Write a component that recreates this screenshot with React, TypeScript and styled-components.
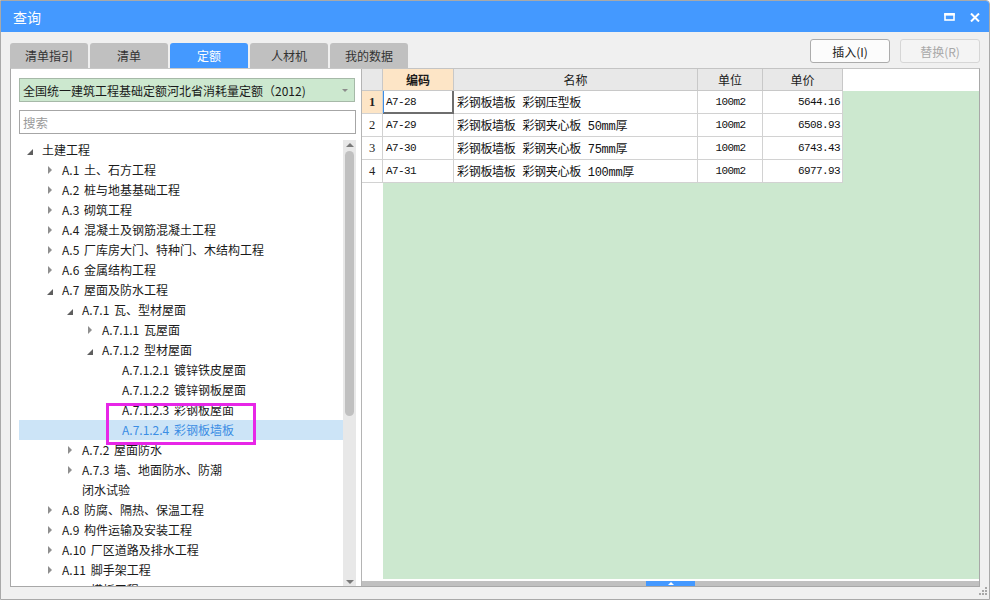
import React from 'react';
import styled, { createGlobalStyle } from 'styled-components';

const BLUE = '#4499ff';
const GREEN = '#cce8cf';
const GRID = '#d2d2d2';

const GlobalStyle = createGlobalStyle`
  html, body { margin: 0; padding: 0; }
  body {
    width: 990px;
    height: 600px;
    overflow: hidden;
    font-family: "Noto Sans CJK SC", "Noto Sans", sans-serif;
  }
  * { box-sizing: border-box; }
`;

type TreeNode = {
  label: string;
  level: number;
  state: 'open' | 'closed' | 'leaf';
  selected?: boolean;
};

const treeData: TreeNode[] = [
  { label: '土建工程', level: 0, state: 'open' },
  { label: 'A.1 土、石方工程', level: 1, state: 'closed' },
  { label: 'A.2 桩与地基基础工程', level: 1, state: 'closed' },
  { label: 'A.3 砌筑工程', level: 1, state: 'closed' },
  { label: 'A.4 混凝土及钢筋混凝土工程', level: 1, state: 'closed' },
  { label: 'A.5 厂库房大门、特种门、木结构工程', level: 1, state: 'closed' },
  { label: 'A.6 金属结构工程', level: 1, state: 'closed' },
  { label: 'A.7 屋面及防水工程', level: 1, state: 'open' },
  { label: 'A.7.1 瓦、型材屋面', level: 2, state: 'open' },
  { label: 'A.7.1.1 瓦屋面', level: 3, state: 'closed' },
  { label: 'A.7.1.2 型材屋面', level: 3, state: 'open' },
  { label: 'A.7.1.2.1 镀锌铁皮屋面', level: 4, state: 'leaf' },
  { label: 'A.7.1.2.2 镀锌钢板屋面', level: 4, state: 'leaf' },
  { label: 'A.7.1.2.3 彩钢板屋面', level: 4, state: 'leaf' },
  { label: 'A.7.1.2.4 彩钢板墙板', level: 4, state: 'leaf', selected: true },
  { label: 'A.7.2 屋面防水', level: 2, state: 'closed' },
  { label: 'A.7.3 墙、地面防水、防潮\n闭水试验', level: 2, state: 'closed' },
  { label: 'A.8 防腐、隔热、保温工程', level: 1, state: 'closed' },
  { label: 'A.9 构件运输及安装工程', level: 1, state: 'closed' },
  { label: 'A.10 厂区道路及排水工程', level: 1, state: 'closed' },
  { label: 'A.11 脚手架工程', level: 1, state: 'closed' },
  { label: 'A.12 模板工程', level: 1, state: 'closed' },
];

const tabs = ['清单指引', '清单', '定额', '人材机', '我的数据'];

const columns = [
  { key: 'code', title: '编码', w: 71, align: 'left' },
  { key: 'name', title: '名称', w: 244, align: 'left' },
  { key: 'unit', title: '单位', w: 65, align: 'center' },
  { key: 'price', title: '单价', w: 80, align: 'right' },
] as const;

const rows = [
  { code: 'A7-28', name: '彩钢板墙板 彩钢压型板', unit: '100m2', price: '5644.16' },
  { code: 'A7-29', name: '彩钢板墙板 彩钢夹心板 50mm厚', unit: '100m2', price: '6508.93' },
  { code: 'A7-30', name: '彩钢板墙板 彩钢夹心板 75mm厚', unit: '100m2', price: '6743.43' },
  { code: 'A7-31', name: '彩钢板墙板 彩钢夹心板 100mm厚', unit: '100m2', price: '6977.93' },
];

export default function App() {
  return (
    <>
      <GlobalStyle />
      <Window>
        <TitleBar>
          <Title>查询</Title>
          <TitleIcons>
            <svg width="11" height="8" viewBox="0 0 11 8">
              <rect x="1" y="1.25" width="9" height="5.75" fill="none" stroke="#fff" strokeWidth="1.6" />
              <rect x="0.2" y="0" width="10.6" height="2.6" fill="#fff" />
            </svg>
            <svg width="10" height="9" viewBox="0 0 10 9">
              <path d="M1 0.5 L9 8.5 M9 0.5 L1 8.5" stroke="#fff" strokeWidth="2" />
            </svg>
          </TitleIcons>
        </TitleBar>

        <Body>
          <Toolbar>
            <Tabs>
              {tabs.map((t) => (
                <Tab key={t} $active={t === '定额'}>{t}</Tab>
              ))}
            </Tabs>
            <Buttons>
              <Button>插入(I)</Button>
              <Button $disabled>替换(R)</Button>
            </Buttons>
          </Toolbar>

          <Content>
            <LeftPane>
              <Select>
                <span>全国统一建筑工程基础定额河北省消耗量定额（2012)</span>
                <SelectArrow />
              </Select>
              <Search>搜索</Search>
              <Tree>
                <TreeList>
                  {treeData.map((n) => (
                    <TreeRow key={n.label} $level={n.level} $selected={n.selected}>
                      <Toggle>
                        {n.state === 'open' && <OpenArrow />}
                        {n.state === 'closed' && <ClosedArrow />}
                      </Toggle>
                      <TreeLabel>{n.label}</TreeLabel>
                    </TreeRow>
                  ))}
                  <Marker />
                </TreeList>
                <VScroll>
                  <ArrowUp />
                  <VThumb />
                  <Spacer />
                  <ArrowDown />
                </VScroll>
              </Tree>
            </LeftPane>

            <RightPane>
              <HeaderRow>
                <HeadNum />
                {columns.map((c) => (
                  <HeadCell key={c.key} $w={c.w} $active={c.key === 'code'}>
                    {c.title}
                  </HeadCell>
                ))}
              </HeaderRow>
              <TableBody>
                <NumColumn>
                  {rows.map((r, i) => (
                    <NumCell key={r.code} $active={i === 0}>{i + 1}</NumCell>
                  ))}
                </NumColumn>
                <DataArea>
                  {rows.map((r, i) => (
                    <DataRow key={r.code}>
                      {columns.map((c) => (
                        <Cell
                          key={c.key}
                          $w={c.w}
                          $align={c.align}
                          $mono={c.key !== 'name'}
                          $focus={i === 0 && c.key === 'code'}
                        >
                          {r[c.key]}
                        </Cell>
                      ))}
                    </DataRow>
                  ))}
                </DataArea>
              </TableBody>
              <HScroll>
                <HThumb>
                  <HThumbArrow />
                </HThumb>
              </HScroll>
            </RightPane>
          </Content>

          <Footer>
            <svg width="10" height="10" viewBox="0 0 10 10">
              {[
                [7, 0],
                [4, 3], [7, 3],
                [1, 6], [4, 6], [7, 6],
              ].map(([x, y]) => (
                <rect key={`${x}-${y}`} x={x} y={y} width="2" height="2" fill="#a8a8a8" />
              ))}
            </svg>
          </Footer>
        </Body>
      </Window>
    </>
  );
}

const Window = styled.div`
  width: 990px;
  height: 600px;
  display: flex;
  flex-direction: column;
  border: 1px solid #a9a9a9;
  border-top-right-radius: 4px;
  background: #f0f0f0;
  overflow: hidden;
`;

const TitleBar = styled.div`
  height: 31px;
  flex: none;
  display: flex;
  align-items: center;
  justify-content: space-between;
  padding: 0 9px 0 12px;
  background: ${BLUE};
`;

const Title = styled.div`
  color: #fff;
  font-size: 14px;
`;

const TitleIcons = styled.div`
  display: flex;
  align-items: center;
  gap: 15px;
  padding-top: 1px;
`;

const Body = styled.div`
  flex: 1;
  display: flex;
  flex-direction: column;
  padding: 7px 9px 0 9px;
`;

const Toolbar = styled.div`
  height: 29px;
  flex: none;
  display: flex;
  justify-content: space-between;
`;

const Tabs = styled.div`
  display: flex;
  align-items: flex-end;
  gap: 2px;
`;

const Tab = styled.div<{ $active?: boolean }>`
  width: 78px;
  height: 25px;
  display: flex;
  align-items: center;
  justify-content: center;
  border-radius: 3px 3px 0 0;
  font-size: 12px;
  background: ${(p) => (p.$active ? BLUE : '#c0c0c0')};
  color: ${(p) => (p.$active ? '#fff' : '#333')};
`;

const Buttons = styled.div`
  display: flex;
  align-items: flex-start;
  gap: 10px;
`;

const Button = styled.div<{ $disabled?: boolean }>`
  width: 80px;
  height: 24px;
  display: flex;
  align-items: center;
  justify-content: center;
  border-radius: 3px;
  font-size: 12px;
  border: 1px solid ${(p) => (p.$disabled ? '#d6d6d6' : '#acacac')};
  background: ${(p) => (p.$disabled ? '#f4f4f4' : '#fcfcfc')};
  color: ${(p) => (p.$disabled ? '#a8a8a8' : '#222')};
`;

const Content = styled.div`
  height: 519px;
  flex: none;
  display: flex;
  border: 1px solid #a8a8a8;
  border-top-color: #c8c8c8;
  background: #fff;
`;

const LeftPane = styled.div`
  width: 351px;
  flex: none;
  display: flex;
  flex-direction: column;
  padding: 9px 5px 0 8px;
  border-right: 1px solid #b4b4b4;
  background: #fff;
`;

const Select = styled.div`
  height: 24px;
  flex: none;
  display: flex;
  align-items: center;
  justify-content: space-between;
  padding: 0 6px 0 3px;
  margin-right: 1px;
  border: 1px solid #a6b9a8;
  background: ${GREEN};
  font-size: 12px;
  color: #1a1a1a;
`;

const SelectArrow = styled.span`
  width: 0;
  height: 0;
  border-left: 3px solid transparent;
  border-right: 3px solid transparent;
  border-top: 3px solid #8c8c8c;
`;

const Search = styled.div`
  height: 24px;
  flex: none;
  margin-top: 8px;
  display: flex;
  align-items: center;
  padding-left: 3px;
  border: 1px solid #a6a6a6;
  font-size: 12.5px;
  color: #9a9a9a;
`;

const Tree = styled.div`
  flex: 1;
  min-height: 0;
  margin-top: 6px;
  display: flex;
`;

const TreeList = styled.div`
  flex: 1;
  position: relative;
  overflow: hidden;
`;

const TreeRow = styled.div<{ $level: number; $selected?: boolean }>`
  display: flex;
  align-items: flex-start;
  min-height: 20px;
  line-height: 20px;
  padding-left: ${(p) => p.$level * 20 + 5}px;
  font-size: 12px;
  word-spacing: 2px;
  background: ${(p) => (p.$selected ? '#cce4f7' : 'transparent')};
  color: ${(p) => (p.$selected ? '#3b8de4' : '#1a1a1a')};
`;

const Toggle = styled.span`
  width: 18px;
  height: 20px;
  flex: none;
  display: flex;
  align-items: center;
  padding-left: 3px;
`;

const OpenArrow = styled.span`
  width: 0;
  height: 0;
  margin-top: 3px;
  border-left: 6px solid transparent;
  border-bottom: 6px solid #5e5e5e;
`;

const ClosedArrow = styled.span`
  width: 0;
  height: 0;
  margin-left: 1px;
  border-top: 4px solid transparent;
  border-bottom: 4px solid transparent;
  border-left: 4px solid #8e8e8e;
`;

const TreeLabel = styled.span`
  white-space: pre-line;
`;

const Marker = styled.div`
  position: absolute;
  left: 87px;
  top: 263px;
  width: 150px;
  height: 42px;
  border: 3px solid #e726e7;
  pointer-events: none;
`;

const VScroll = styled.div`
  width: 13px;
  flex: none;
  display: flex;
  flex-direction: column;
  align-items: center;
  padding: 3px 0 2px;
  background: #e8e8e8;
`;

const ArrowUp = styled.span`
  width: 0;
  height: 0;
  border-left: 4.5px solid transparent;
  border-right: 4.5px solid transparent;
  border-bottom: 4px solid #7a7a7a;
`;

const ArrowDown = styled.span`
  width: 0;
  height: 0;
  border-left: 4.5px solid transparent;
  border-right: 4.5px solid transparent;
  border-top: 4px solid #7a7a7a;
`;

const VThumb = styled.div`
  width: 9px;
  height: 265px;
  margin-top: 4px;
  border-radius: 5px;
  background: #c0c0c0;
`;

const Spacer = styled.div`
  flex: 1;
`;

const RightPane = styled.div`
  flex: 1;
  display: flex;
  flex-direction: column;
  background: #fff;
`;

const HeaderRow = styled.div`
  height: 23px;
  flex: none;
  display: flex;
  border-top: 1px solid #c4c4c4;
  margin-top: -1px;
`;

const HeadNum = styled.div`
  width: 21px;
  flex: none;
  background: #e8e8e8;
  border-right: 1px solid #c8c8c8;
  border-bottom: 1px solid #c8c8c8;
`;

const HeadCell = styled.div<{ $w: number; $active?: boolean }>`
  width: ${(p) => p.$w}px;
  flex: none;
  display: flex;
  align-items: center;
  justify-content: center;
  font-size: 12px;
  color: #1a1a1a;
  font-weight: ${(p) => (p.$active ? 700 : 400)};
  background: ${(p) => (p.$active ? '#fde5c6' : '#e8e8e8')};
  border-right: 1px solid #c8c8c8;
  border-bottom: 1px solid #c8c8c8;
`;

const TableBody = styled.div`
  flex: 1;
  min-height: 0;
  display: flex;
`;

const NumColumn = styled.div`
  width: 21px;
  flex: none;
  background: #fff;
`;

const NumCell = styled.div<{ $active?: boolean }>`
  height: 23px;
  display: flex;
  align-items: center;
  justify-content: center;
  font-family: "Liberation Serif", serif;
  font-size: 12.5px;
  font-weight: ${(p) => (p.$active ? 700 : 400)};
  color: #222;
  background: ${(p) => (p.$active ? '#fde5c6' : '#fff')};
  border-right: 1px solid ${GRID};
  border-bottom: 1px solid ${GRID};
`;

const DataArea = styled.div`
  flex: 1;
  background: ${GREEN};
`;

const DataRow = styled.div`
  display: flex;
  height: 23px;
`;

const Cell = styled.div<{
  $w: number;
  $align: 'left' | 'center' | 'right';
  $mono?: boolean;
  $focus?: boolean;
}>`
  width: ${(p) => p.$w}px;
  flex: none;
  display: flex;
  align-items: center;
  justify-content: ${(p) =>
    p.$align === 'left' ? 'flex-start' : p.$align === 'right' ? 'flex-end' : 'center'};
  padding: 0 2px 0 3px;
  background: #fff;
  color: #111;
  white-space: pre;
  font-family: "Liberation Mono", "Noto Sans CJK SC", monospace;
  font-size: ${(p) => (p.$mono ? '11px' : '12px')};
  letter-spacing: ${(p) => (p.$mono ? '-0.6px' : '-0.3px')};
  border-right: 1px solid ${GRID};
  border-bottom: 1px solid ${GRID};
  box-shadow: ${(p) =>
    p.$focus ? 'inset 1px 0 0 #3d8ee6, inset -1px 0 0 #6e6e6e, inset 0 -1px 0 #6e6e6e' : 'none'};
  ${(p) => (p.$focus ? 'border-right-color: #6e6e6e; border-bottom-color: #6e6e6e;' : '')}
`;

const HScroll = styled.div`
  height: 5px;
  flex: none;
  margin-top: 2px;
  display: flex;
  background: #c0c0c0;
`;

const HThumb = styled.div`
  width: 49px;
  margin-left: 284px;
  display: flex;
  align-items: center;
  justify-content: center;
  background: ${BLUE};
`;

const HThumbArrow = styled.span`
  width: 0;
  height: 0;
  border-left: 3px solid transparent;
  border-right: 3px solid transparent;
  border-bottom: 3px solid #fff;
`;

const Footer = styled.div`
  flex: 1;
  display: flex;
  justify-content: flex-end;
  align-items: flex-end;
  padding: 0 0 3px;
  margin-right: -8px;
`;
